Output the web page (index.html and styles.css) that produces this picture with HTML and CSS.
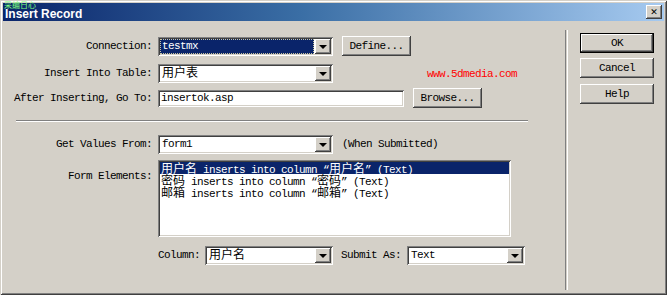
FILE: index.html
```html
<!DOCTYPE html>
<html lang="en">
<head>
    <meta charset="UTF-8">
    <title>Insert Record</title>
    <link rel="stylesheet" href="styles.css">
</head>
<body>
    <div class="window">
        <div class="titlebar">
            <span class="title">Insert Record</span>
            <span class="mark">采编日心</span>
            <span class="close">&#x2715;</span>
        </div>
        <div class="content">
            <div class="main">
                <div class="row r1">
                    <span class="lbl">Connection:</span>
                    <div class="combo w175"><span class="val focus">testmx</span><span class="drop"></span></div>
                    <span class="btn define">Define...</span>
                </div>
                <div class="row r2">
                    <span class="lbl">Insert Into Table:</span>
                    <div class="combo w175"><span class="val"><span class="zh">用户表</span></span><span class="drop"></span></div>
                    <span class="site">www.5dmedia.com</span>
                </div>
                <div class="row r3">
                    <span class="lbl">After Inserting, Go To:</span>
                    <div class="field">insertok.asp</div>
                    <span class="btn browse">Browse...</span>
                </div>

                <div class="sep"></div>

                <div class="row r4">
                    <span class="lbl">Get Values From:</span>
                    <div class="combo w175"><span class="val">form1</span><span class="drop"></span></div>
                    <span class="note">(When Submitted)</span>
                </div>
                <div class="row r5">
                    <span class="lbl">Form Elements:</span>
                    <div class="listbox">
                        <div class="item active"><span class="zh">用户名</span> inserts into column “<span class="zh">用户名</span>” (Text)</div>
                        <div class="item"><span class="zh">密码</span> inserts into column “<span class="zh">密码</span>” (Text)</div>
                        <div class="item"><span class="zh">邮箱</span> inserts into column “<span class="zh">邮箱</span>” (Text)</div>
                    </div>
                </div>
                <div class="row r6">
                    <span class="spacer"></span>
                    <span class="small-lbl">Column:</span>
                    <div class="combo w128"><span class="val"><span class="zh">用户名</span></span><span class="drop"></span></div>
                    <span class="small-lbl submit-lbl">Submit As:</span>
                    <div class="combo w118"><span class="val">Text</span><span class="drop"></span></div>
                </div>
            </div>

            <div class="vsep"></div>

            <div class="side">
                <span class="btn side-btn default">OK</span>
                <span class="btn side-btn cancel">Cancel</span>
                <span class="btn side-btn help">Help</span>
            </div>
        </div>
    </div>
</body>
</html>
```

FILE: styles.css
```css
body {
    margin: 0;
    background-color: #d4d0c8;
    font-family: "Liberation Mono", "Noto Sans CJK SC", monospace;
    font-size: 11px;
    letter-spacing: -0.6px;
    color: #000;
}

.window {
    position: relative;
    width: 667px;
    height: 295px;
    box-sizing: border-box;
    padding: 3px;
    background: #d4d0c8;
    box-shadow: inset 1px 1px #d4d0c8, inset -1px -1px #404040,
                inset 2px 2px #ffffff, inset -2px -2px #808080;
}

.titlebar {
    position: relative;
    height: 18px;
    display: flex;
    align-items: center;
    background: linear-gradient(to right, #0a246a 0%, #3a6ea5 45%, #a6caf0 100%);
}

.title {
    font-family: "Liberation Sans", Arial, sans-serif;
    font-weight: bold;
    font-size: 12px;
    letter-spacing: 0;
    color: #ffffff;
    padding-left: 2px;
    padding-top: 3px;
}

/* small watermark over the title */
.mark {
    position: absolute;
    left: 1px;
    top: -3px;
    font-family: "Noto Sans CJK SC", sans-serif;
    font-size: 8px;
    letter-spacing: 0;
    color: #7cff7c;
    line-height: 10px;
}

.close {
    margin-left: auto;
    margin-right: 2px;
    width: 16px;
    height: 14px;
    box-sizing: border-box;
    display: flex;
    align-items: center;
    justify-content: center;
    font-family: "DejaVu Sans", sans-serif;
    font-weight: bold;
    font-size: 9px;
    letter-spacing: 0;
    background: #d4d0c8;
    box-shadow: inset -1px -1px #404040, inset 1px 1px #ffffff,
                inset -2px -2px #808080, inset 2px 2px #d4d0c8;
}

.content {
    display: flex;
    height: 268px;
}

.main {
    width: 562px;
    padding-top: 15px;
}

.row {
    display: flex;
    align-items: center;
    height: 20px;
}

.r2 { margin-top: 7px; }
.r3 { margin-top: 5px; }
.r4 { margin-top: 12px; }
.r5 { margin-top: 6px; height: auto; align-items: flex-start; }
.r6 { margin-top: 8px; }

.lbl {
    width: 149px;
    margin-right: 6px;
    text-align: right;
    white-space: nowrap;
}

.r5 .lbl {
    padding-top: 10px;
}

.zh {
    font-family: "Noto Sans CJK SC", sans-serif;
    font-size: 12px;
    letter-spacing: 0;
    line-height: 12px;
}

/* sunken combo box */
.combo {
    height: 19px;
    box-sizing: border-box;
    display: flex;
    align-items: center;
    background: #ffffff;
    padding: 2px;
    box-shadow: inset 1px 1px #808080, inset -1px -1px #ffffff,
                inset 2px 2px #404040, inset -2px -2px #d4d0c8;
}

.w175 { width: 175px; }
.w128 { width: 128px; }
.w118 { width: 118px; }

.val {
    flex: 1;
    height: 15px;
    line-height: 15px;
    padding-left: 2px;
    white-space: nowrap;
}

.val.focus {
    background: #0a246a;
    color: #ffffff;
    outline: 1px dotted #c8c4a0;
    outline-offset: -1px;
    margin-right: 1px;
}

.drop {
    width: 16px;
    height: 15px;
    box-sizing: border-box;
    display: flex;
    align-items: center;
    justify-content: center;
    background: #d4d0c8;
    box-shadow: inset -1px -1px #404040, inset 1px 1px #ffffff,
                inset -2px -2px #808080, inset 2px 2px #d4d0c8;
}

.drop::before {
    content: "";
    border-left: 4px solid transparent;
    border-right: 4px solid transparent;
    border-top: 4px solid #000;
    margin-top: 1px;
}

.btn {
    display: flex;
    align-items: center;
    justify-content: center;
    height: 20px;
    box-sizing: border-box;
    background: #d4d0c8;
    white-space: nowrap;
    box-shadow: inset -1px -1px #404040, inset 1px 1px #ffffff,
                inset -2px -2px #808080, inset 2px 2px #d4d0c8;
}

.define {
    width: 69px;
    margin-left: 9px;
}

.site {
    margin-left: 94px;
    margin-top: 2px;
    color: #ff0000;
}

.field {
    width: 246px;
    height: 17px;
    box-sizing: border-box;
    padding: 2px 3px;
    line-height: 13px;
    background: #ffffff;
    box-shadow: inset 1px 1px #808080, inset -1px -1px #ffffff,
                inset 2px 2px #404040, inset -2px -2px #d4d0c8;
}

.browse {
    width: 69px;
    margin-left: 9px;
}

.sep {
    margin: 12px 0 0 13px;
    width: 512px;
    border-top: 1px solid #808080;
    border-bottom: 1px solid #ffffff;
}

.note {
    margin-left: 9px;
}

.listbox {
    width: 353px;
    height: 77px;
    box-sizing: border-box;
    padding: 2px;
    background: #ffffff;
    box-shadow: inset 1px 1px #808080, inset -1px -1px #ffffff,
                inset 2px 2px #404040, inset -2px -2px #d4d0c8;
}

.item {
    height: 12px;
    line-height: 12px;
    padding-left: 1px;
    white-space: nowrap;
}

.item.active {
    background: #0a246a;
    color: #ffffff;
}

.spacer {
    width: 155px;
}

.small-lbl {
    margin-right: 5px;
}

.submit-lbl {
    margin-left: 8px;
    margin-right: 6px;
}

.vsep {
    margin-top: 9px;
    width: 1px;
    height: 260px;
    border-left: 1px solid #808080;
    border-right: 1px solid #ffffff;
}

.side {
    display: flex;
    flex-direction: column;
    padding-top: 12px;
    margin-left: 12px;
}

.side-btn {
    width: 74px;
}

.default {
    box-shadow: inset 0 0 0 1px #000000, inset -2px -2px #404040, inset 2px 2px #ffffff,
                inset -3px -3px #808080;
}

.cancel { margin-top: 5px; }
.help { margin-top: 6px; }
```
